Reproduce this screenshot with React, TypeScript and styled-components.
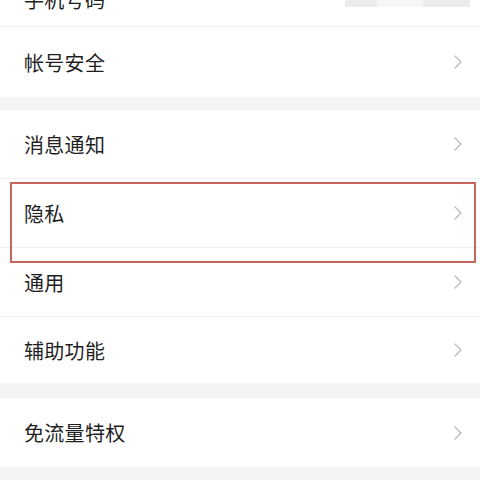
import React from "react";
import styled, { createGlobalStyle } from "styled-components";

const GlobalStyle = createGlobalStyle`
  html, body {
    margin: 0;
    padding: 0;
    background: #ffffff;
    overflow: hidden;
  }
  body {
    font-family: "Noto Sans CJK SC", "Noto Sans", sans-serif;
  }
`;

const Page = styled.div`
  margin-top: -28px;
  background: #ffffff;
`;

const Group = styled.div`
  background: #ffffff;
`;

const Band = styled.div<{ $h: number }>`
  height: ${(p) => p.$h}px;
  background: #f4f4f6;
`;

const Row = styled.div<{ $h: number; $divider?: boolean }>`
  position: relative;
  box-sizing: border-box;
  height: ${(p) => p.$h}px;
  display: flex;
  align-items: center;
  justify-content: space-between;
  padding: 0 18px 0 24px;
  border-bottom: ${(p) => (p.$divider ? "1px solid #f1f1f3" : "none")};
`;

const Label = styled.span`
  font-size: 20px;
  color: #1f1f1f;
  letter-spacing: 0.3px;
`;

const MaskedValue = styled.div`
  display: flex;
  align-items: center;
  margin-right: -8px;
`;

const MaskBlock = styled.div<{ $w: number; $c: string }>`
  width: ${(p) => p.$w}px;
  height: 16px;
  background: ${(p) => p.$c};
`;

const Chevron = styled.svg`
  width: 8px;
  height: 14px;
  display: block;
`;

const Highlight = styled.div`
  position: absolute;
  top: 3px;
  left: 10px;
  right: 4px;
  height: 81px;
  box-sizing: border-box;
  border: 2px solid #c7665d;
  pointer-events: none;
  z-index: 2;
`;

const Arrow = () => (
  <Chevron viewBox="0 0 8 14">
    <polyline
      points="1,1 7,7 1,13"
      fill="none"
      stroke="#b9b9bb"
      strokeWidth="1.3"
      strokeLinecap="round"
      strokeLinejoin="round"
    />
  </Chevron>
);

type Item = { label: string; h: number; divider?: boolean; marked?: boolean };

const messageGroup: Item[] = [
  { label: "消息通知", h: 69, divider: true },
  { label: "隐私", h: 69, divider: true, marked: true },
  { label: "通用", h: 69, divider: true },
  { label: "辅助功能", h: 66 },
];

const SettingRow: React.FC<{ item: Item }> = ({ item }) => (
  <Row $h={item.h} $divider={item.divider}>
    <Label>{item.label}</Label>
    <Arrow />
    {item.marked && <Highlight />}
  </Row>
);

export default function App() {
  return (
    <>
      <GlobalStyle />
      <Page>
        <Group>
          <Row $h={55} $divider>
            <Label>手机号码</Label>
            <MaskedValue>
              <MaskBlock $w={32} $c="#ececee" />
              <MaskBlock $w={46} $c="#f6f6f7" />
              <MaskBlock $w={47} $c="#ececee" />
            </MaskedValue>
          </Row>
          <Row $h={70}>
            <Label>帐号安全</Label>
            <Arrow />
          </Row>
        </Group>
        <Band $h={13} />
        <Group>
          {messageGroup.map((item) => (
            <SettingRow key={item.label} item={item} />
          ))}
        </Group>
        <Band $h={15} />
        <Group>
          <SettingRow item={{ label: "免流量特权", h: 69 }} />
        </Group>
        <Band $h={13} />
      </Page>
    </>
  );
}
